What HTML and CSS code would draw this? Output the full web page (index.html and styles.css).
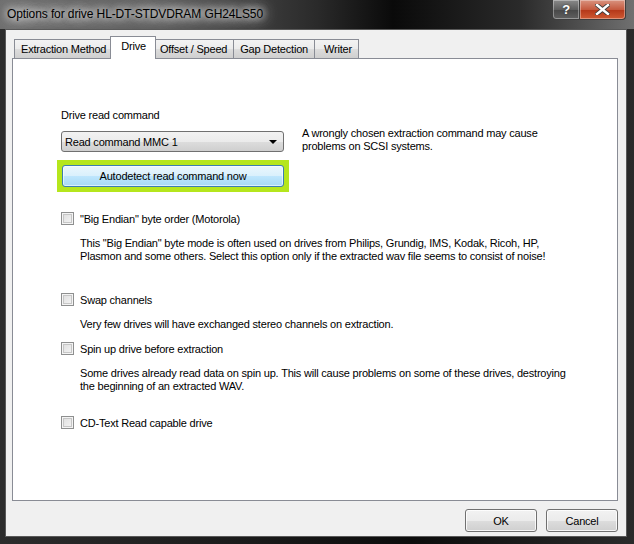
FILE: index.html
```html
<!DOCTYPE html>
<html lang="en">
<head>
    <meta charset="UTF-8">
    <title>Options for drive</title>
    <link rel="stylesheet" href="styles.css">
</head>
<body>
    <div class="window">
        <div class="titlebar">
            <span class="title">Options for drive HL-DT-STDVDRAM GH24LS50</span>
            <div class="caption-buttons">
                <div class="cap-btn help">?</div>
                <div class="cap-btn close">
                    <svg width="15" height="11" viewBox="0 0 15 11">
                        <path d="M2 1 L13 10 M13 1 L2 10" stroke="#3b3b3b" stroke-width="4.2" stroke-linecap="square"/>
                        <path d="M2 1 L13 10 M13 1 L2 10" stroke="#fff" stroke-width="2.4" stroke-linecap="square"/>
                    </svg>
                </div>
            </div>
        </div>

        <div class="client">
            <div class="tabs">
                <div class="tab">Extraction Method</div>
                <div class="tab active">Drive</div>
                <div class="tab">Offset / Speed</div>
                <div class="tab">Gap Detection</div>
                <div class="tab last">Writer</div>
            </div>

            <div class="panel">
                <div class="field-label">Drive read command</div>
                <div class="command-row">
                    <div class="left-col">
                        <div class="combo">
                            <span>Read command MMC 1</span>
                            <span class="arrow"></span>
                        </div>
                        <div class="focus-ring">
                            <div class="push blue">Autodetect read command now</div>
                        </div>
                    </div>
                    <div class="note">A wrongly chosen extraction command may cause<br>problems on SCSI systems.</div>
                </div>

                <div class="option first">
                    <span class="check"></span>
                    <span>"Big Endian" byte order (Motorola)</span>
                </div>
                <div class="desc">This "Big Endian" byte mode is often used on drives from Philips, Grundig, IMS, Kodak, Ricoh, HP,<br>Plasmon and some others. Select this option only if the extracted wav file seems to consist of noise!</div>

                <div class="option swap">
                    <span class="check"></span>
                    <span>Swap channels</span>
                </div>
                <div class="desc">Very few drives will have exchanged stereo channels on extraction.</div>

                <div class="option spin">
                    <span class="check"></span>
                    <span>Spin up drive before extraction</span>
                </div>
                <div class="desc">Some drives already read data on spin up. This will cause problems on some of these drives, destroying<br>the beginning of an extracted WAV.</div>

                <div class="option cdtext">
                    <span class="check"></span>
                    <span>CD-Text Read capable drive</span>
                </div>
            </div>

            <div class="footer">
                <div class="push">OK</div>
                <div class="push">Cancel</div>
            </div>
        </div>
    </div>
</body>
</html>
```

FILE: styles.css
```css
body {
    margin: 0;
    padding: 0;
    background-color: #1c1c1c;
    font-family: "Liberation Sans", Arial, sans-serif;
    font-size: 11px;
    letter-spacing: -0.2px;
    color: #000;
}

.window {
    width: 634px;
    height: 544px;
    display: flex;
    flex-direction: column;
    background: linear-gradient(to right, #2c2c2c 0%, #1a1a1a 40%, #0c0c0c 65%, #2a2a2a 100%);
}

/* title bar */
.titlebar {
    height: 29px;
    display: flex;
    justify-content: space-between;
    background: linear-gradient(to right, #6e6e6e 0%, #5c5c5c 25%, #2a2a2a 50%, #0a0a0a 62%, #2a2a2a 82%, #707070 100%);
}

.title {
    padding: 7px 0 0 7px;
    font-size: 12px;
    letter-spacing: -0.1px;
    color: #000;
    text-shadow: 0 0 6px #e6e6e6, 0 0 10px #d8d8d8, 0 0 14px #cfcfcf, 0 0 18px #cfcfcf;
}

.caption-buttons {
    display: flex;
    margin-right: 8px;
    height: 20px;
}

.cap-btn {
    height: 19px;
    border: 1px solid #3e3e3e;
    border-top: none;
    display: flex;
    align-items: center;
    justify-content: center;
    box-shadow: inset 0 0 0 1px rgba(255, 255, 255, 0.35);
}

.help {
    width: 26px;
    border-radius: 0 0 0 4px;
    background: linear-gradient(#8a8a8a, #5e5e5e 50%, #474747 51%, #606060);
    color: #fff;
    font-weight: bold;
    font-size: 13px;
    text-shadow: 0 0 2px #333;
}

.close {
    width: 45px;
    border-left: none;
    border-radius: 0 0 4px 0;
    background: linear-gradient(#d9937f, #c55a3f 50%, #b33618 51%, #cf5a33);
}

/* client area */
.client {
    flex: 1;
    margin: 0 7px 7px 5px;
    background-color: #f0f0f0;
    border: 1px solid #595959;
    padding: 6px 8px 0 6px;
    display: flex;
    flex-direction: column;
}

.tabs {
    display: flex;
    align-items: flex-end;
    margin-left: 2px;
    height: 23px;
    position: relative;
    z-index: 1;
    margin-bottom: -1px;
}

.tab {
    height: 20px;
    line-height: 18px;
    padding: 0 6px;
    box-sizing: border-box;
    border: 1px solid #898c95;
    border-right: none;
    background: linear-gradient(#f3f3f3, #ebebeb 50%, #dddddd 51%, #cfcfcf);
}

.tab.last {
    border-right: 1px solid #898c95;
    padding: 0 6px 0 9px;
}

.tab.active {
    height: 23px;
    background: #fff;
    border-bottom: none;
    border-right: 1px solid #898c95;
    margin: 0 -2px;
    padding: 0 9px 0 10px;
    line-height: 19px;
    position: relative;
    z-index: 2;
}

.tab.active + .tab {
    border-left: none;
}

.panel {
    height: 443px;
    box-sizing: border-box;
    background: #fff;
    border: 1px solid #898c95;
    padding: 50px 0 0 48px;
}

.field-label {
    height: 13px;
    line-height: 13px;
}

.command-row {
    display: flex;
    margin-top: 9px;
}

.left-col {
    width: 232px;
    margin-left: -4px;
}

.combo {
    margin-left: 4px;
    width: 223px;
    height: 21px;
    box-sizing: border-box;
    border: 1px solid #707070;
    border-radius: 3px;
    background: linear-gradient(#f2f2f2, #ebebeb 50%, #dddddd 51%, #cfcfcf);
    display: flex;
    align-items: center;
    justify-content: space-between;
    padding: 0 6px 0 3px;
}

.arrow {
    width: 0;
    height: 0;
    border-left: 4px solid transparent;
    border-right: 4px solid transparent;
    border-top: 4px solid #000;
}

.focus-ring {
    margin-top: 8px;
    width: 232px;
    height: 32px;
    box-sizing: border-box;
    background: #b5e61d;
    padding: 5px;
}

.push {
    height: 23px;
    box-sizing: border-box;
    border: 1px solid #707070;
    border-radius: 3px;
    background: linear-gradient(#f2f2f2, #ebebeb 50%, #dddddd 51%, #cfcfcf);
    box-shadow: inset 0 0 0 1px rgba(255, 255, 255, 0.8);
    display: flex;
    align-items: center;
    justify-content: center;
    font-size: 12px;
}

.push.blue {
    height: 22px;
    font-size: 11px;
    border-color: #3c7fb1;
    background: linear-gradient(#eaf6fd, #d9f0fc 50%, #bee6fd 51%, #a7d9f5);
    box-shadow: inset 0 0 0 1px rgba(255, 255, 255, 0.6);
}

.note {
    margin-left: 13px;
    margin-top: -4px;
    line-height: 13px;
}

.option {
    display: flex;
    align-items: center;
    height: 13px;
    margin-top: 14px;
}

.option.first {
    margin-top: 20px;
}

.option.swap {
    margin-top: 30px;
}

.option.spin {
    margin-top: 11px;
}

.option.cdtext {
    margin-top: 23px;
}

.check {
    width: 13px;
    height: 13px;
    box-sizing: border-box;
    border: 1px solid #8e8f8f;
    background: linear-gradient(135deg, #dcdcdc, #f6f6f6);
    box-shadow: inset 0 0 0 1px #f4f4f4, inset 0 0 0 2px #c6c6c6;
    margin-right: 6px;
}

.desc {
    margin: 12px 0 0 19px;
    line-height: 13px;
}

.footer {
    display: flex;
    justify-content: flex-end;
    gap: 9px;
    margin-top: 8px;
}

.footer .push {
    width: 72px;
    font-size: 11px;
}
```
